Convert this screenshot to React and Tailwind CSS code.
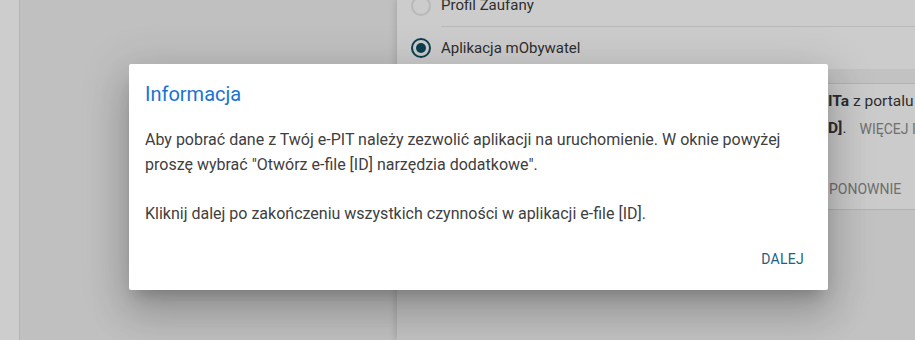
import React from 'react';

function Radio({ checked, label, last }) {
  return (
    <div className="flex items-center h-[42px] pl-[14px]">
      <span
        className={`w-5 h-5 rounded-full border-2 flex items-center justify-center shrink-0 ${
          checked ? 'border-[#0d3f50]' : 'border-[#b8b8b8]'
        }`}
      >
        {checked && <span className="w-[10px] h-[10px] rounded-full bg-[#0d3f50]" />}
      </span>
      <div
        className={`ml-[10px] flex-1 h-full flex items-center text-[15px] text-[#2e2e2e] ${
          last ? '' : 'border-b border-[#b9b9b9]'
        }`}
      >
        {label}
      </div>
    </div>
  );
}

export default function App() {
  return (
    <div className="relative w-[915px] h-[340px] overflow-hidden flex font-['Roboto','Liberation_Sans',sans-serif]">
      <div className="w-[20px] bg-[#cdcdcd] border-r border-[#b3b3b3]" />
      <div className="w-[377px] bg-[#c0c0c0]" />

      <div className="flex-1 flex flex-col bg-[#c2c2c2] shadow-[-2px_0_6px_rgba(0,0,0,0.12)] overflow-hidden">
        <div className="bg-[#cccccc] mt-[-16px]">
          <div className="h-[1px]" />
          <Radio label="Profil Zaufany" />
          <Radio label="Aplikacja mObywatel" checked last />
        </div>

        <div className="mt-[14px] bg-[#cbcbcb] border-t border-b border-[#aab3ba] h-[127px] pt-[6px] pl-4 text-[15.5px] text-[#2e2e2e] whitespace-nowrap">
          <div className="flex h-6 items-center">
            <span className="w-[415px] text-right overflow-hidden shrink-0">
              <b>e-P</b>
            </span>
            <span>
              <b>ITa</b> z portalu podatkowego
            </span>
          </div>
          <div className="flex h-6 mt-[3px] items-center">
            <span className="w-[415px] text-right overflow-hidden shrink-0">
              <b>[I</b>
            </span>
            <span>
              <b>D]</b>.
            </span>
            <span className="ml-[13px] text-[14px] text-[#6f6f6f] uppercase">Więcej informacji</span>
          </div>
          <div className="flex h-9 mt-[30px] items-center">
            <span className="w-[416px] text-right overflow-hidden shrink-0 text-[14px] text-[#6f6f6f]">
              SPRÓBUJ&nbsp;
            </span>
            <span className="text-[14px] text-[#6f6f6f]">PONOWNIE</span>
          </div>
        </div>
      </div>

      <div className="absolute left-[129px] top-[64px] w-[699px] h-[226px] bg-white rounded-[2px] flex flex-col shadow-[0_11px_15px_-7px_rgba(0,0,0,0.2),0_24px_38px_3px_rgba(0,0,0,0.14),0_9px_46px_8px_rgba(0,0,0,0.12)]">
        <h2 className="pt-4 px-4 text-[20px] leading-[28px] text-[#1a73d2] font-normal">Informacja</h2>
        <p className="mt-[20px] px-4 text-[16px] leading-[24.5px] text-[#404040]">
          Aby pobrać dane z Twój e-PIT należy zezwolić aplikacji na uruchomienie. W oknie powyżej proszę wybrać
          "Otwórz e-file [ID] narzędzia dodatkowe".
          <br />
          <br />
          Kliknij dalej po zakończeniu wszystkich czynności w aplikacji e-file [ID].
        </p>
        <div className="mt-auto flex justify-end pr-4 pb-[13px]">
          <button className="h-9 px-2 text-[14px] text-[#24607c] uppercase tracking-[0.02em]">Dalej</button>
        </div>
      </div>
    </div>
  );
}
